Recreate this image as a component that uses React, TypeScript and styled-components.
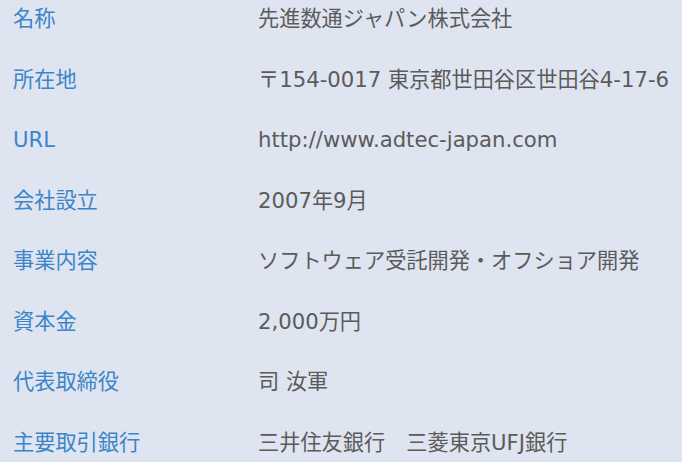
import React from "react";
import styled, { createGlobalStyle } from "styled-components";

const GlobalStyle = createGlobalStyle`
  html, body {
    margin: 0;
    padding: 0;
    background: #dfe4f1;
  }
  body {
    font-family: "DejaVu Sans", "Noto Sans CJK JP", sans-serif;
  }
`;

const Page = styled.div`
  width: 682px;
  height: 462px;
  overflow: hidden;
  background: #dfe4f1;
  padding: 4px 0 0 13px;
  box-sizing: border-box;
`;

const Table = styled.dl`
  margin: 0;
  display: grid;
  grid-template-columns: 245px 1fr;
  grid-auto-rows: 60.57px;
`;

const Label = styled.dt`
  margin: 0;
  font-size: 21.2px;
  line-height: 30px;
  color: #3a86c8;
  white-space: nowrap;
`;

const Value = styled.dd`
  margin: 0;
  font-size: 21.2px;
  line-height: 30px;
  color: #5b5b5b;
  white-space: nowrap;
`;

const rows: [string, string][] = [
  ["名称", "先進数通ジャパン株式会社"],
  ["所在地", "〒154-0017 東京都世田谷区世田谷4-17-6"],
  ["URL", "http://www.adtec-japan.com"],
  ["会社設立", "2007年9月"],
  ["事業内容", "ソフトウェア受託開発・オフショア開発"],
  ["資本金", "2,000万円"],
  ["代表取締役", "司 汝軍"],
  ["主要取引銀行", "三井住友銀行　三菱東京UFJ銀行"],
];

export default function App() {
  return (
    <Page>
      <GlobalStyle />
      <Table>
        {rows.map(([label, value]) => (
          <React.Fragment key={label}>
            <Label>{label}</Label>
            <Value>{value}</Value>
          </React.Fragment>
        ))}
      </Table>
    </Page>
  );
}
